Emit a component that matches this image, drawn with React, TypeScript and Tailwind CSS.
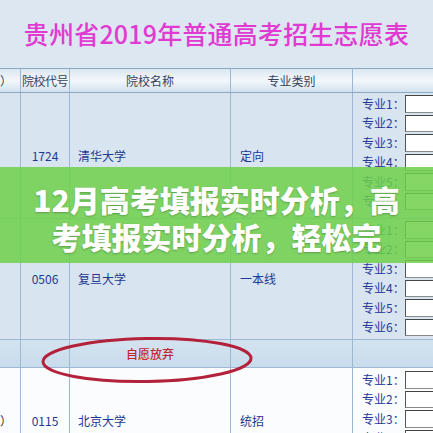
import React from "react";

/* 志愿表截图：标题 + 表格 + 绿色横幅 + 红圈 */

const FONT = '"Noto Sans CJK SC", "Noto Sans", sans-serif';

function Majors({ count }: { count: number }) {
  return (
    <div className="flex flex-col gap-[2px]">
      {Array.from({ length: count }, (_, i) => (
        <div key={i} className="flex h-[17.5px] items-center">
          <span className="w-[52px] shrink-0 pl-[9px] text-[12px] leading-none text-[#26399a]">
            专业{i + 1}：
          </span>
          {/* 输入框伸出画面右边 */}
          <span className="h-full w-[60px] shrink-0 border border-[#8a8a8a] border-l-[#555] border-t-[#444] bg-white" />
        </div>
      ))}
    </div>
  );
}

function DataRow({
  paren,
  code,
  name,
  kind,
  height,
  pt,
  light,
}: {
  paren?: boolean;
  code: string;
  name: string;
  kind: string;
  height: number;
  pt: number;
  light?: boolean;
}) {
  return (
    <div
      className={
        "flex border-b border-[#9cb8d4] text-[12px] text-[#1d3992] " +
        (light ? "bg-[#fafcfe]" : "bg-[#d8e4f0]")
      }
      style={{ height }}
    >
      <div className="flex w-[21px] shrink-0 items-center overflow-hidden border-r border-[#9cb8d4] text-[#333]">
        {paren ? "）" : ""}
      </div>
      <div className="flex w-[49px] shrink-0 items-center justify-center border-r border-[#9cb8d4]">
        {code}
      </div>
      <div className="flex w-[161px] shrink-0 items-center border-r border-[#9cb8d4] pl-[8px]">
        {name}
      </div>
      <div className="flex w-[122px] shrink-0 items-center border-r border-[#9cb8d4] pl-[9px]">
        {kind}
      </div>
      <div className="min-w-0 flex-1 overflow-hidden" style={{ paddingTop: pt }}>
        <Majors count={6} />
      </div>
    </div>
  );
}

export default function App() {
  return (
    <div
      className="relative h-[433px] w-[433px] overflow-hidden bg-[#dde7f1]"
      style={{ fontFamily: FONT }}
    >
      {/* 标题 */}
      <div className="flex h-[68px] items-center justify-center pb-[2px]">
        <h1 className="text-[25px] font-medium leading-none tracking-[0.2px] text-[#e03ad2]">
          贵州省2019年普通高考招生志愿表
        </h1>
      </div>

      {/* 表头 */}
      <div className="flex h-[25px] border-y border-[#8aa7c4] bg-gradient-to-b from-[#dbe6f1] via-[#f3f7fb] to-[#d3e1ee] text-[12px] text-[#34425e]">
        <div className="flex w-[21px] shrink-0 items-center overflow-hidden border-r border-[#9cb8d4]">
          ）
        </div>
        <div className="flex w-[49px] shrink-0 items-center justify-center border-r border-[#9cb8d4] tracking-[-0.5px]">
          院校代号
        </div>
        <div className="flex w-[161px] shrink-0 items-center justify-center border-r border-[#9cb8d4]">
          院校名称
        </div>
        <div className="flex w-[122px] shrink-0 items-center justify-center border-r border-[#9cb8d4]">
          专业类别
        </div>
        <div className="flex-1" />
      </div>

      <DataRow code="1724" name="清华大学" kind="定向" height={126} pt={2} />
      <DataRow code="0506" name="复旦大学" kind="一本线" height={121} pt={2} />

      {/* 自愿放弃 */}
      <div className="flex h-[28px] border-b border-[#9cb8d4] bg-gradient-to-b from-[#d3e3f0] to-[#c9dcec] text-[12px]">
        <div className="w-[21px] shrink-0 border-r border-[#9cb8d4]" />
        <div className="w-[49px] shrink-0 border-r border-[#9cb8d4]" />
        <div className="flex w-[161px] shrink-0 items-center justify-center border-r border-[#9cb8d4] font-medium text-[#c2282f]">
          自愿放弃
        </div>
        <div className="w-[122px] shrink-0 border-r border-[#9cb8d4]" />
        <div className="flex-1" />
      </div>

      <DataRow paren light code="0115" name="北京大学" kind="统招" height={106} pt={3} />

      {/* 红色手绘圈 */}
      <svg className="pointer-events-none absolute left-0 top-0" width="433" height="433">
        <ellipse
          cx="147"
          cy="360"
          rx="104"
          ry="21.5"
          fill="none"
          stroke="#b3223a"
          strokeWidth="3"
          transform="rotate(-1 147 360)"
        />
      </svg>

      {/* 绿色横幅 */}
      <div className="absolute left-0 top-[167px] h-[96px] w-full bg-[#6fd04a]/85 pt-[14px] text-center text-[30px] font-black leading-[37px] text-white [text-shadow:0_1px_2px_rgba(0,0,0,0.25)]">
        <span className="block whitespace-nowrap">12月高考填报实时分析，高</span>
        <span className="block whitespace-nowrap">考填报实时分析，轻松完</span>
      </div>
    </div>
  );
}
